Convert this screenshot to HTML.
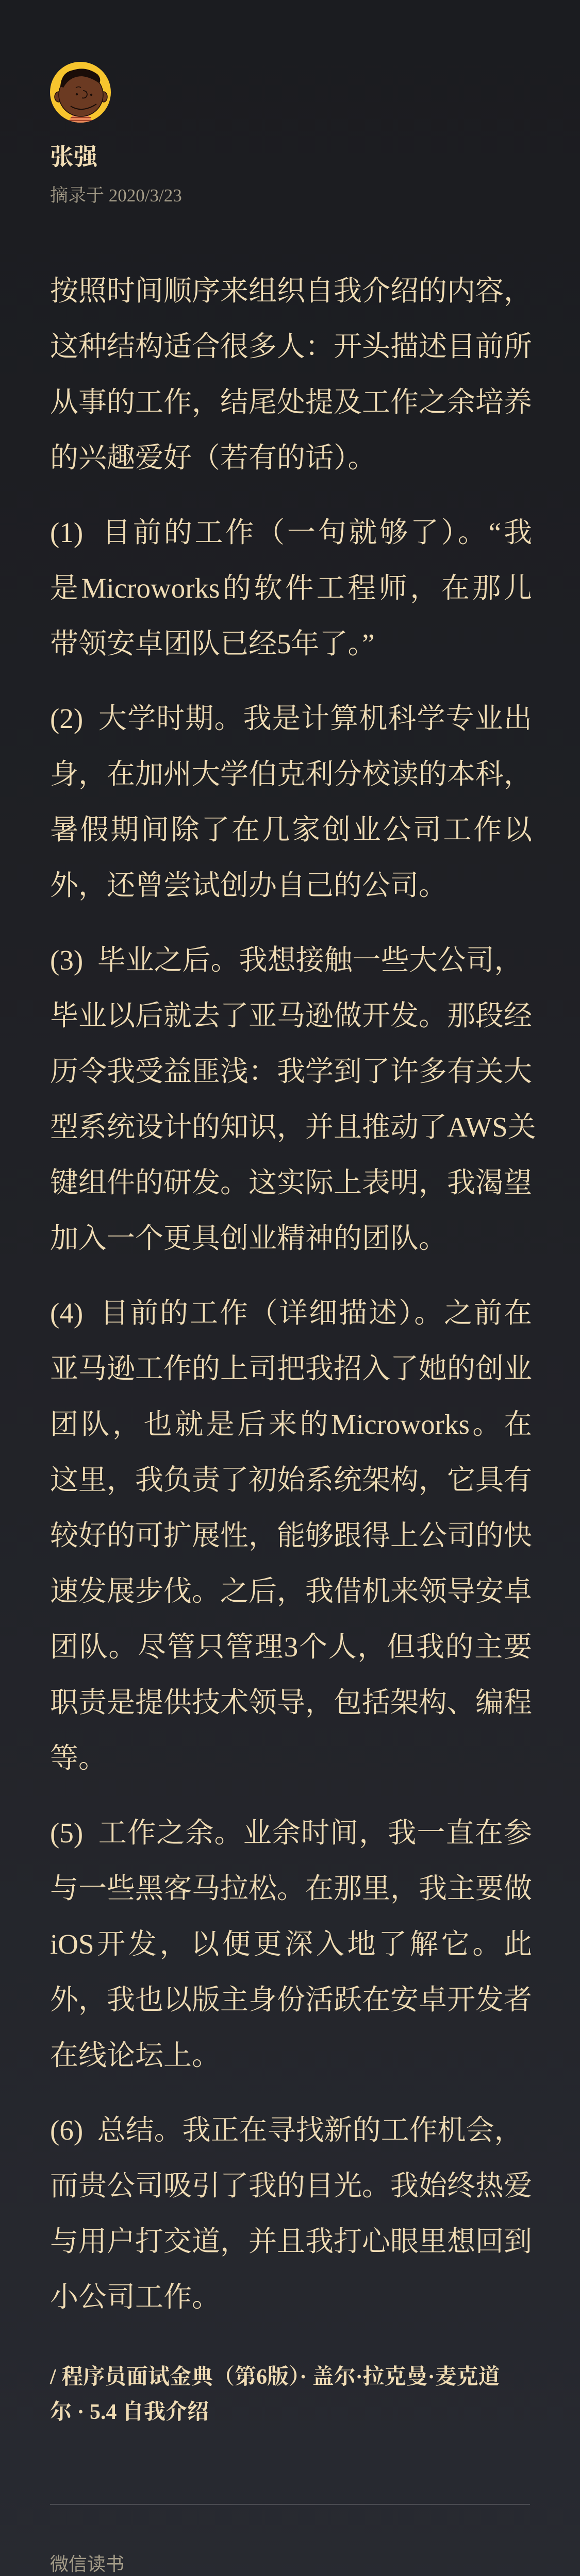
<!DOCTYPE html>
<html><head><meta charset="utf-8">
<style>
*{margin:0;padding:0;box-sizing:border-box}
html,body{width:1125px;height:5101px;overflow:hidden}
body{background:linear-gradient(180deg,#1b1c20 0%,#212227 50%,#282a31 100%);font-family:"Liberation Serif","Noto Serif CJK SC",serif;color:#f0dcb4;position:relative}
.av{position:absolute;left:97px;top:120px;width:118px;height:118px}
.name{position:absolute;left:97px;top:275px;font-size:46px;font-weight:bold;line-height:60px;color:#f0dcb4}
.date{position:absolute;left:97px;top:356px;font-size:35px;line-height:48px;color:#a49c88}
.body{position:absolute;left:97px;top:511px;width:935px;font-size:55px;line-height:108px}
.p{margin-bottom:37px}
.l{white-space:nowrap;height:108px;overflow:visible}
.f{text-align:justify;text-align-last:justify}
.src{position:absolute;left:97px;top:4580px;width:935px;font-size:42px;font-weight:bold;line-height:68px;white-space:nowrap}
.hr{position:absolute;left:97px;top:4860px;width:931px;height:2px;background:#4a4b51}
.foot{position:absolute;left:97px;top:4952px;font-size:36px;line-height:50px;color:#a49c88;font-family:"Liberation Sans","Noto Sans CJK SC",sans-serif}
</style></head><body>
<svg class="av" viewBox="0 0 118 118">
<defs><clipPath id="c"><circle cx="59" cy="59" r="59"/></clipPath></defs>
<g clip-path="url(#c)">
<rect width="118" height="118" fill="#f7c52e"/>
<path d="M46 100 L72 100 L84 118 L34 118 Z" fill="#e8875a"/>
<path d="M40 108 H80 M37 114 H83" stroke="#a4452a" stroke-width="2"/>
<ellipse cx="17" cy="68" rx="8" ry="10" fill="#6b3a22" stroke="#1a0d08" stroke-width="1.5"/>
<ellipse cx="104" cy="68" rx="7" ry="10" fill="#6b3a22" stroke="#1a0d08" stroke-width="1.5"/>
<ellipse cx="60" cy="64" rx="43" ry="42" fill="#6b3a22" stroke="#1a0d08" stroke-width="1.5"/>
<path d="M20 48 Q22 20 45 16 Q70 8 92 24 Q100 32 96 42 Q80 30 62 28 Q38 28 26 50 Z" fill="#1a0d08"/>
<circle cx="52" cy="63" r="2.2" fill="#1a0d08"/><circle cx="80" cy="64" r="2.2" fill="#1a0d08"/>
<path d="M64 56 Q72 56 72 64 Q70 72 62 70" fill="none" stroke="#1a0d08" stroke-width="1.8"/>
<path d="M50 50 Q56 47 60 50" fill="none" stroke="#1a0d08" stroke-width="1.5"/>
<path d="M40 86 Q62 100 90 82" fill="none" stroke="#1a0d08" stroke-width="2"/>
</g></svg>
<div class="name">张强</div>
<div class="date">摘录于 2020/3/23</div>
<div class="body">
<div class="p">
<div class="l">按照时间顺序来组织自我介绍的内容，</div>
<div class="l f">这种结构适合很多人：开头描述目前所</div>
<div class="l f">从事的工作，结尾处提及工作之余培养</div>
<div class="l">的兴趣爱好（若有的话）。</div>
</div>
<div class="p">
<div class="l f">(1)&nbsp;&nbsp;目前的工作（一句就够了）。“我</div>
<div class="l f">是Microworks的软件工程师，在那儿</div>
<div class="l">带领安卓团队已经5年了。”</div>
</div>
<div class="p">
<div class="l f">(2)&nbsp;&nbsp;大学时期。我是计算机科学专业出</div>
<div class="l">身，在加州大学伯克利分校读的本科，</div>
<div class="l f">暑假期间除了在几家创业公司工作以</div>
<div class="l">外，还曾尝试创办自己的公司。</div>
</div>
<div class="p">
<div class="l">(3)&nbsp;&nbsp;毕业之后。我想接触一些大公司，</div>
<div class="l f">毕业以后就去了亚马逊做开发。那段经</div>
<div class="l f">历令我受益匪浅：我学到了许多有关大</div>
<div class="l f">型系统设计的知识，并且推动了AWS关</div>
<div class="l f">键组件的研发。这实际上表明，我渴望</div>
<div class="l">加入一个更具创业精神的团队。</div>
</div>
<div class="p">
<div class="l f">(4)&nbsp;&nbsp;目前的工作（详细描述）。之前在</div>
<div class="l f">亚马逊工作的上司把我招入了她的创业</div>
<div class="l f">团队，也就是后来的Microworks。在</div>
<div class="l f">这里，我负责了初始系统架构，它具有</div>
<div class="l f">较好的可扩展性，能够跟得上公司的快</div>
<div class="l f">速发展步伐。之后，我借机来领导安卓</div>
<div class="l f">团队。尽管只管理3个人，但我的主要</div>
<div class="l f">职责是提供技术领导，包括架构、编程</div>
<div class="l">等。</div>
</div>
<div class="p">
<div class="l f">(5)&nbsp;&nbsp;工作之余。业余时间，我一直在参</div>
<div class="l f">与一些黑客马拉松。在那里，我主要做</div>
<div class="l f">iOS开发，以便更深入地了解它。此</div>
<div class="l f">外，我也以版主身份活跃在安卓开发者</div>
<div class="l">在线论坛上。</div>
</div>
<div class="p">
<div class="l">(6)&nbsp;&nbsp;总结。我正在寻找新的工作机会，</div>
<div class="l f">而贵公司吸引了我的目光。我始终热爱</div>
<div class="l f">与用户打交道，并且我打心眼里想回到</div>
<div class="l">小公司工作。</div>
</div>
</div>
<div class="src">/ 程序员面试金典（第6版）· 盖尔·拉克曼·麦克道<br>尔 · 5.4 自我介绍</div>
<div class="hr"></div>
<div class="foot">微信读书</div>
</body></html>
